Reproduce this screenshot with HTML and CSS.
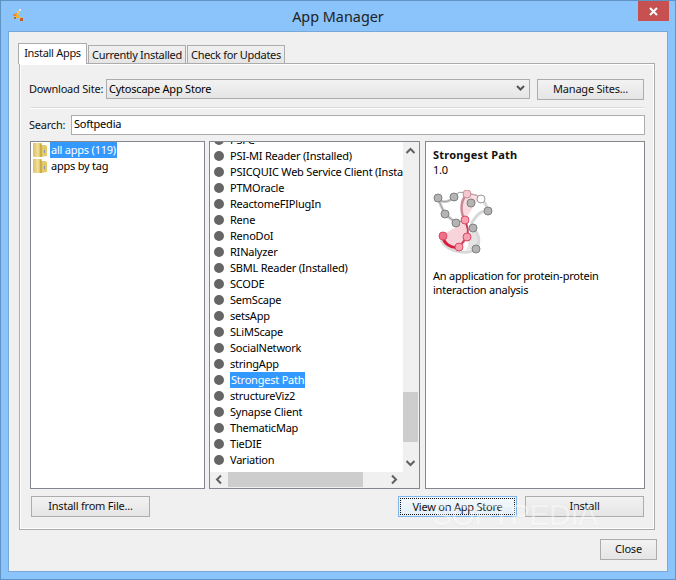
FILE: index.html
```html
<!DOCTYPE html>
<html lang="en">
<head>
<meta charset="utf-8">
<title>App Manager</title>
<link rel="stylesheet" href="styles.css">
</head>
<body>
<div class="window">
  <header class="titlebar">
    <svg class="app-icon" width="16" height="16" viewBox="0 0 16 16">
      <rect x="6" y="6" width="2" height="2" fill="#f0a030"/><rect x="8" y="4" width="2" height="3" fill="#f7c060"/><rect x="10" y="2" width="2" height="2" fill="#f5e6d0"/><rect x="4" y="7" width="3" height="2" fill="#f08a20"/><rect x="7" y="8" width="3" height="3" fill="#f6b030"/><rect x="5" y="10" width="2" height="2" fill="#a07040"/><rect x="10" y="10" width="2" height="1" fill="#f0c050"/><rect x="11" y="11" width="3" height="3" fill="#d05a20"/>
    </svg>
    <span class="title">App Manager</span>
    <span class="close-x">
      <svg width="11" height="11" viewBox="0 0 11 11"><path d="M2 2l7 7M9 2l-7 7" stroke="#fff" stroke-width="2"/></svg>
    </span>
  </header>
  <div class="client">
    <nav class="tabs">
      <span class="tab tab-active">Install Apps</span>
      <span class="tab">Currently Installed</span>
      <span class="tab">Check for Updates</span>
    </nav>
    <section class="panel">
      <div class="row-site">
        <span class="label">Download Site:</span>
        <div class="combo"><span>Cytoscape App Store</span>
          <svg width="9" height="7" viewBox="0 0 9 7"><path d="M1 1l3.500 3.500L8 1" fill="none" stroke="#555" stroke-width="2"/></svg>
        </div>
        <button class="btn btn-manage">Manage Sites...</button>
      </div>
      <div class="sep"></div>
      <div class="row-search">
        <span class="label">Search:</span>
        <div class="input">Softpedia</div>
      </div>
      <div class="panes">
        <div class="pane pane-tree">
          <div class="tree-row">
            <svg class="folder" width="16" height="16" viewBox="0 0 16 16"><use href="#folder"/></svg>
            <span class="sel">all apps (119)</span>
          </div>
          <div class="tree-row">
            <svg class="folder" width="16" height="16" viewBox="0 0 16 16"><use href="#folder"/></svg>
            <span>apps by tag</span>
          </div>
        </div>
        <div class="pane pane-list">
          <div class="list-view">
            <ul class="list">
              <li>PSFC</li>
              <li>PSI-MI Reader (Installed)</li>
              <li>PSICQUIC Web Service Client (Installed)</li>
              <li>PTMOracle</li>
              <li>ReactomeFIPlugIn</li>
              <li>Rene</li>
              <li>RenoDoI</li>
              <li>RINalyzer</li>
              <li>SBML Reader (Installed)</li>
              <li>SCODE</li>
              <li>SemScape</li>
              <li>setsApp</li>
              <li>SLiMScape</li>
              <li>SocialNetwork</li>
              <li>stringApp</li>
              <li><span class="sel">Strongest Path</span></li>
              <li>structureViz2</li>
              <li>Synapse Client</li>
              <li>ThematicMap</li>
              <li>TieDIE</li>
              <li>Variation</li>
            </ul>
            <div class="vbar">
              <svg class="arrow" width="16" height="17" viewBox="0 0 16 17"><path d="M3.500 11l4-4 4 4" fill="none" stroke="#606060" stroke-width="2"/></svg>
              <div class="vtrack"><div class="vthumb"></div></div>
              <svg class="arrow" width="16" height="17" viewBox="0 0 16 17"><path d="M3.500 6l4 4 4-4" fill="none" stroke="#606060" stroke-width="2"/></svg>
            </div>
          </div>
          <div class="hbar">
            <svg class="arrow" width="17" height="16" viewBox="0 0 17 16"><path d="M11 3.500l-4 4 4 4" fill="none" stroke="#606060" stroke-width="2"/></svg>
            <div class="htrack"><div class="hthumb"></div></div>
            <svg class="arrow" width="17" height="16" viewBox="0 0 17 16"><path d="M6 3.500l4 4-4 4" fill="none" stroke="#606060" stroke-width="2"/></svg>
            <div class="corner"></div>
          </div>
        </div>
        <div class="pane pane-detail">
          <div class="app-name">Strongest Path</div>
          <div class="app-version">1.0</div>
          <svg class="app-logo" width="60" height="64" viewBox="0 0 60 64">
            <path d="M34 4C26 14 28 26 32 30L46 8Z" fill="#f7d4da" opacity=".85"/>
            <path d="M32 30C22 40 10 42 10 48C14 62 32 62 34 47Z" fill="#f8d4da"/>
            <path d="M34 47C36 54 36 60 30 60L43 59C46 50 44 40 40 38Z" fill="#e4e4e4"/>
            <path d="M48 9C52 12 54 16 55 21C46 20 42 28 38 34M40 38C46 44 48 52 43 59C36 64 16 64 8 50" fill="none" stroke="#d8d8d8" stroke-width="3"/>
            <path d="M5 8C9 14 16 12 21 7M5 8C7 14 10 20 12 24L23 33" fill="none" stroke="#cfcfcf" stroke-width="3"/>
            <path d="M34 4C42 4 46 6 48 9" fill="none" stroke="#c8a0a8" stroke-width="1.500"/>
            <path d="M5 8C9 14 16 12 21 7M21 7C24 2 28 1 34 4M5 8C7 14 10 20 12 24L23 33L32 30" fill="none" stroke="#9a9a9a" stroke-width="1"/>
            <path d="M34 4C26 12 28 24 32 30" fill="none" stroke="#c88a92" stroke-width="2.500"/>
            <path d="M32 30C34 36 36 40 34 47L26 57" fill="none" stroke="#c83a50" stroke-width="2"/>
            <path d="M10 46C10 53 18 59 26 57" fill="none" stroke="#d81c3c" stroke-width="3"/>
            <g fill="#b4b4b4" stroke="#808080" stroke-width="1">
              <circle cx="5" cy="8" r="4"/><circle cx="21" cy="7" r="4"/><circle cx="38" cy="13" r="4"/><circle cx="12" cy="24" r="4"/><circle cx="23" cy="33" r="4"/><circle cx="55" cy="21" r="4"/><circle cx="40" cy="38" r="4"/><circle cx="43" cy="59" r="4"/>
            </g>
            <circle cx="48" cy="9" r="4" fill="#fff" stroke="#999"/>
            <g fill="#f7a0b0" stroke="#d84a64" stroke-width="1">
              <circle cx="34" cy="4" r="4" fill="#f5c8d0" stroke="#c89098"/><circle cx="32" cy="30" r="4"/><circle cx="34" cy="47" r="4"/><circle cx="26" cy="57" r="4"/><circle cx="10" cy="46" r="4" fill="#f0708a"/>
            </g>
          </svg>
          <p class="app-desc">An application for protein-protein interaction analysis</p>
        </div>
      </div>
      <div class="actions">
        <button class="btn btn-file">Install from File...</button>
        <div class="actions-right">
          <button class="btn btn-view"><span class="focus">View on App Store</span></button>
          <button class="btn btn-install">Install</button>
        </div>
      </div>
      <div class="watermark">SOFTPEDIA</div>
    </section>
    <footer class="footer"><button class="btn btn-close">Close</button></footer>
  </div>
</div>
<svg width="0" height="0" class="defs">
  <defs>
    <linearGradient id="fg" x1="0" x2="1" y1="0" y2="0"><stop offset="0" stop-color="#dcc068"/><stop offset=".6" stop-color="#f2e09a"/><stop offset="1" stop-color="#d8b850"/></linearGradient>
    <symbol id="folder" viewBox="0 0 16 16">
      <path d="M1 1h7l1 1v13H2l-1-1Z" fill="url(#fg)"/>
      <path d="M9 3h4l2 1v10l-6 1Z" fill="#e4c86c"/>
      <path d="M9 1v14" stroke="#b89838"/>
      <path d="M12 8h1v3h-1z" fill="#7a9cc0"/>
    </symbol>
  </defs>
</svg>
</body>
</html>
```
FILE: styles.css
```css
* { box-sizing: border-box; }
html, body { margin: 0; padding: 0; }
body { font-family: "Noto Sans", sans-serif; font-size: 11px; letter-spacing: -.22px; color: #000; }
.defs { position: absolute; }
.window {
  width: 676px; height: 580px; background: #8ac4fa;
  border: 1px solid #5f93c4; padding: 0 7px 7px; display: flex; flex-direction: column;
}
.titlebar { height: 30px; flex: none; display: flex; align-items: center; justify-content: center; position: relative; }
.app-icon { position: absolute; left: 1px; top: 6px; }
.title { font-size: 14.4px; letter-spacing: 0; color: #222; }
.close-x {
  position: absolute; right: -1px; top: 0; width: 31px; height: 20px; background: #c75050;
  display: flex; align-items: center; justify-content: center;
}
.client {
  flex: 1; background: #f0f0f0; border: 1px solid #78a8d8;
  padding: 11px 12px 11px 9px; display: flex; flex-direction: column;
}
.tabs { display: flex; align-items: flex-end; height: 21px; position: relative; z-index: 1; }
.tab {
  width: 98px; height: 18px; border: 1px solid #acacac; border-bottom: 0; background: linear-gradient(#f0f0f0, #e5e5e5);
  margin-bottom: 1px; margin-left: 1px; display: flex; align-items: center; justify-content: center; color: #111;
  white-space: nowrap; letter-spacing: -.3px;
}
.tab-active {
  width: 69px; height: 21px; margin: 0; padding-bottom: 3px; background: #fff;
}
.panel {
  width: 636px; height: 467px; margin-left: 1px; margin-top: -1px; border: 1px solid #acacac; position: relative;
  box-shadow: inset 0 0 0 1px #fff; padding: 15px 9px 0; display: flex; flex-direction: column;
}
.row-site { display: flex; height: 21px; align-items: center; }
.label { color: #111; white-space: nowrap; padding-bottom: 2px; }
.row-site .label { width: 77px; flex: none; }
.combo {
  width: 424px; height: 20px; align-self: flex-start; border: 1px solid #acacac; background: linear-gradient(#f2f2f2, #e5e5e5);
  display: flex; align-items: center; justify-content: space-between; padding: 0 4px 2px 2px;
}
.btn {
  font: inherit; letter-spacing: inherit; color: #111; border: 1px solid #acacac; background: linear-gradient(#f2f2f2, #e5e5e5);
  height: 21px; padding: 0 0 2px; display: flex; align-items: center; justify-content: center;
}
.btn-manage { width: 107px; margin-left: 7px; }
.sep { height: 2px; margin: 7px 0 6px 1px; background: #dcdcdc; border-bottom: 1px solid #fff; }
.row-search { display: flex; height: 20px; align-items: center; }
.row-search .label { width: 42px; flex: none; }
.input { flex: 1; height: 20px; background: #fff; border: 1px solid #acacac; padding-left: 2px; line-height: 15px; }
.panes { display: flex; height: 348px; margin-top: 6px; margin-left: 1px; }
.pane { border: 1px solid #828790; background: #fff; height: 348px; }
.pane-tree { width: 175px; }
.tree-row { display: flex; height: 16px; align-items: center; padding-left: 1px; }
.folder { flex: none; margin-right: 2px; }
.tree-row span { padding: 0 1px; line-height: 16px; }
.sel { background: #3399ff; color: #fff; }
.pane-list { width: 211px; margin-left: 4px; display: flex; flex-direction: column; background: #f0f0f0; }
.list-view { flex: 1; display: flex; min-height: 0; }
.list { flex: 1; margin: 0; padding: 0; list-style: none; overflow: hidden; background: #fff; min-width: 0; }
.list li {
  height: 16px; line-height: 16px; white-space: nowrap; padding-left: 20px; position: relative;
}
.list li:first-child { margin-top: -10px; }
.list li::before {
  content: ""; position: absolute; left: 4px; top: 3px; width: 10px; height: 10px; border-radius: 50%; background: #666;
}
.list .sel { padding: 0 1px; display: inline-block; height: 16px; }
.vbar { width: 16px; flex: none; display: flex; flex-direction: column; background: #f0f0f0; }
.arrow { flex: none; display: block; }
.vtrack { flex: 1; padding-top: 233px; }
.vthumb { height: 50px; background: #cdcdcd; width: 15px; }
.hbar { height: 16px; flex: none; display: flex; background: #f0f0f0; }
.htrack { flex: 1; }
.hthumb { height: 15px; width: 135px; margin-left: 1px; background: #cdcdcd; }
.corner { width: 16px; flex: none; }
.pane-detail { width: 220px; margin-left: 5px; padding: 5px 7px; }
.app-name { font-weight: 700; line-height: 15px; color: #111; letter-spacing: .2px; }
.app-version { line-height: 15px; }
.app-logo { display: block; margin-top: 13px; }
.app-desc { margin: 15px 0 0; line-height: 14px; width: 190px; }
.actions { display: flex; justify-content: space-between; margin: 7px 1px 0 2px; }
.btn-file { width: 119px; }
.actions-right { display: flex; gap: 8px; }
.btn-view { width: 119px; background: linear-gradient(#f2f8fd, #e4eef8); border-color: #7eb4ea; padding: 1px; }
.focus { display: flex; width: 100%; height: 100%; align-items: center; justify-content: center; border: 1px dotted #111; padding-bottom: 1px; }
.btn-install { width: 119px; }
.watermark {
  position: absolute; left: 412px; top: 436px; font: 400 30px/30px "Liberation Sans", sans-serif; letter-spacing: -.5px; color: #fff;
  opacity: .4; pointer-events: none; text-shadow: 0 1px 1px rgba(0,0,0,.06);
}
.footer { display: flex; justify-content: flex-end; margin: 9px -2px 0 0; }
.btn-close { width: 57px; }
```
